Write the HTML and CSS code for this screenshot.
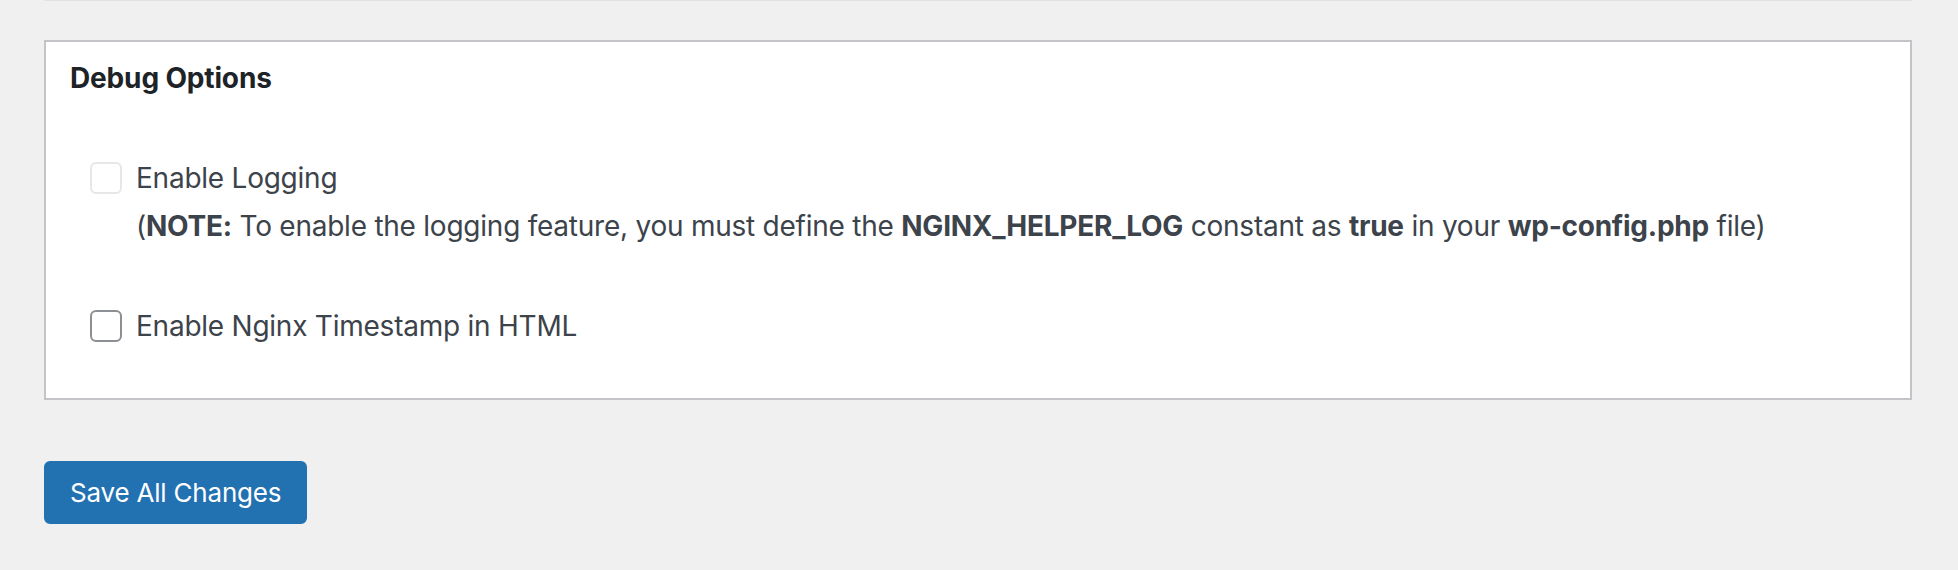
FILE: index.html
```html
<!DOCTYPE html>
<html lang="en">
<head>
<meta charset="utf-8">
<title>Debug Options</title>
<link rel="stylesheet" href="styles.css">
</head>
<body>
<div class="wrap">
  <div class="prev-edge"></div>
  <div class="postbox">
    <h2 class="postbox-title">Debug Options</h2>
    <div class="options">
      <div class="option">
        <label class="row">
          <span class="checkbox checkbox-disabled"></span>
          <span class="label">Enable Logging</span>
        </label>
        <p class="note">(<b>NOTE:</b> To enable the logging feature, you must define the <b>NGINX_HELPER_LOG</b> constant as <b>true</b> in your <b>wp-config.php</b> file)</p>
      </div>
      <div class="option option-last">
        <label class="row">
          <span class="checkbox"></span>
          <span class="label">Enable Nginx Timestamp in HTML</span>
        </label>
      </div>
    </div>
  </div>
  <div class="actions">
    <button class="button-primary" type="button">Save All Changes</button>
  </div>
</div>
</body>
</html>
```
FILE: styles.css
```css
html, body {
  margin: 0;
  padding: 0;
  background: #f0f0f1;
}
body {
  font-family: Inter, "Noto Sans", "Liberation Sans", sans-serif;
  color: #3c434a;
  font-size: 28px;
  line-height: 34px;
  letter-spacing: -0.24px;
}
.wrap {
  width: 1868px;
  margin-left: 44px;
}
.prev-edge {
  height: 1px;
  background: #e3e3e4;
}
.postbox {
  margin-top: 39px;
  background: #fff;
  border: 2px solid #c3c4c7;
  height: 356px;
}
.postbox-title {
  margin: 0;
  padding: 19px 0 0 24px;
  font-size: 28px;
  line-height: 34px;
  font-weight: 700;
  letter-spacing: -0.15px;
  color: #1d2327;
}
.options {
  padding: 66px 0 0 44px;
  display: flex;
  flex-direction: column;
  gap: 66px;
}
.row {
  display: flex;
  align-items: center;
  gap: 14px;
}
.checkbox {
  width: 28px;
  height: 28px;
  border: 2px solid #8c8f94;
  border-radius: 6px;
  background: #fff;
  flex: none;
}
.checkbox-disabled {
  border-color: #e6e7e8;
}
.note {
  margin: 14px 0 0 46px;
}
.note b {
  font-weight: 700;
}
.actions {
  margin-top: 61px;
}
.button-primary {
  font-family: Inter, "Noto Sans", "Liberation Sans", sans-serif;
  font-size: 26px;
  line-height: 34px;
  letter-spacing: -0.2px;
  height: 63px;
  padding: 0 24px;
  background: #2271b1;
  border: 2px solid #2271b1;
  border-radius: 6px;
  color: #fff;
  cursor: pointer;
}
```
